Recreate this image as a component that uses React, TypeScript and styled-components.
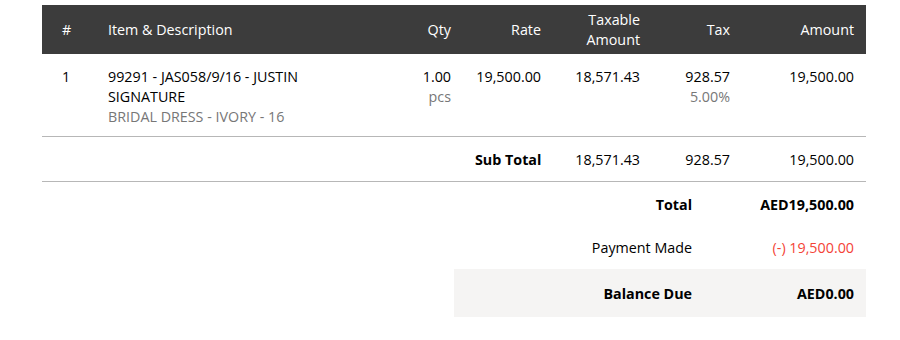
import React from 'react';
import styled, { createGlobalStyle } from 'styled-components';

const GlobalStyle = createGlobalStyle`
  body {
    margin: 0;
    background: #fff;
    font-family: 'Open Sans', 'Liberation Sans', sans-serif;
    font-size: 14.3px;
    color: #000;
  }
`;

const columns = '54px 277px 90px 90px 99px 90px 124px';

const Page = styled.div`
  padding: 5px 34px 0 42px;
  width: 824px;
`;

const HeaderRow = styled.div`
  display: grid;
  grid-template-columns: ${columns};
  height: 49px;
  padding-top: 1px;
  box-sizing: border-box;
  align-items: center;
  background: #3c3c3c;
  color: #fff;
  line-height: 20px;
`;

const Row = styled.div<{ $height?: number }>`
  display: grid;
  grid-template-columns: ${columns};
  box-sizing: border-box;
  border-bottom: 1px solid #b7b7b7;
  line-height: 20px;
  align-items: ${(p) => (p.$height ? 'center' : 'start')};
  height: ${(p) => (p.$height ? `${p.$height}px` : 'auto')};
  padding: ${(p) => (p.$height ? '2px 0 0' : '13px 0 9px')};
`;

const Cell = styled.div<{ $align?: 'left' | 'right'; $first?: boolean; $bold?: boolean }>`
  text-align: ${(p) => p.$align ?? 'right'};
  padding: ${(p) => (p.$first ? '0 0 0 20px' : '0 12px')};
  font-weight: ${(p) => (p.$bold ? 700 : 400)};
  white-space: ${(p) => (p.$bold ? 'nowrap' : 'normal')};
`;

const Muted = styled.div`
  color: #777;
`;

const TotalsBlock = styled.div`
  margin-left: auto;
  width: 412px;
`;

const TotalRow = styled.div<{ $shaded?: boolean; $height: number }>`
  display: grid;
  grid-template-columns: 1fr 150px;
  align-items: center;
  height: ${(p) => p.$height}px;
  padding: 0 12px;
  background: ${(p) => (p.$shaded ? '#f5f4f3' : 'transparent')};
`;

const TotalLabel = styled.div<{ $bold?: boolean }>`
  text-align: right;
  padding-right: 12px;
  font-weight: ${(p) => (p.$bold ? 700 : 400)};
`;

const TotalValue = styled.div<{ $bold?: boolean; $negative?: boolean }>`
  text-align: right;
  font-weight: ${(p) => (p.$bold ? 700 : 400)};
  color: ${(p) => (p.$negative ? '#f44336' : '#000')};
`;

export default function App() {
  return (
    <Page>
      <GlobalStyle />
      <HeaderRow>
        <Cell $align="left" $first>#</Cell>
        <Cell $align="left">Item &amp; Description</Cell>
        <Cell>Qty</Cell>
        <Cell>Rate</Cell>
        <Cell>
          Taxable
          <br />
          Amount
        </Cell>
        <Cell>Tax</Cell>
        <Cell>Amount</Cell>
      </HeaderRow>

      <Row>
        <Cell $align="left" $first>1</Cell>
        <Cell $align="left">
          <div>99291 - JAS058/9/16 - JUSTIN SIGNATURE</div>
          <Muted>BRIDAL DRESS - IVORY - 16</Muted>
        </Cell>
        <Cell>
          <div>1.00</div>
          <Muted>pcs</Muted>
        </Cell>
        <Cell>19,500.00</Cell>
        <Cell>18,571.43</Cell>
        <Cell>
          <div>928.57</div>
          <Muted>5.00%</Muted>
        </Cell>
        <Cell>19,500.00</Cell>
      </Row>

      <Row $height={45}>
        <Cell $first />
        <Cell />
        <Cell />
        <Cell $bold>Sub Total</Cell>
        <Cell>18,571.43</Cell>
        <Cell>928.57</Cell>
        <Cell>19,500.00</Cell>
      </Row>

      <TotalsBlock>
        <TotalRow $height={44}>
          <TotalLabel $bold>Total</TotalLabel>
          <TotalValue $bold>AED19,500.00</TotalValue>
        </TotalRow>
        <TotalRow $height={43}>
          <TotalLabel>Payment Made</TotalLabel>
          <TotalValue $negative>(-) 19,500.00</TotalValue>
        </TotalRow>
        <TotalRow $height={48} $shaded>
          <TotalLabel $bold>Balance Due</TotalLabel>
          <TotalValue $bold>AED0.00</TotalValue>
        </TotalRow>
      </TotalsBlock>
    </Page>
  );
}
